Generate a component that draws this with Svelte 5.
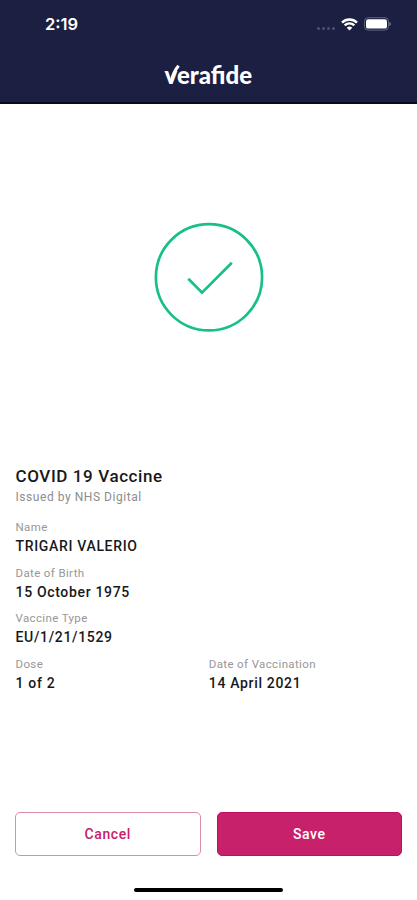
<script>
    let title = "COVID 19 Vaccine"
    let issuer = "NHS Digital"
    let rows = [
        [{label: "Name", value: "TRIGARI VALERIO"}],
        [{label: "Date of Birth", value: "15 October 1975"}],
        [{label: "Vaccine Type", value: "EU/1/21/1529"}],
        [{label: "Dose", value: "1 of 2"}, {label: "Date of Vaccination", value: "14 April 2021"}]
    ]
</script>

<div class="screen">
    <header>
        <div class="status">
            <span class="time">2:19</span>
            <div class="icons">
                <div class="dots"><i></i><i></i><i></i><i></i></div>
                <svg class="wifi" width="17" height="13" viewBox="0 0 17 13">
                    <g fill="none" stroke="#fff" stroke-width="2.4">
                        <path d="M1 4.6a10.6 10.6 0 0 1 15 0" />
                        <path d="M3.7 7.4a6.8 6.8 0 0 1 9.6 0" />
                    </g>
                    <path d="M8.5 12.6 5.7 9.8a4 4 0 0 1 5.6 0z" fill="#fff" />
                </svg>
                <svg class="battery" width="27" height="14" viewBox="0 0 27 14">
                    <rect x=".5" y=".7" width="24" height="12.4" rx="3.6" fill="none" stroke="#5f627e" />
                    <rect x="2" y="2.2" width="21" height="9.4" rx="2.2" fill="#fff" />
                    <path d="M25.5 5v4q1.3-.6 1.3-2t-1.3-2z" fill="#8a8ca0" />
                </svg>
            </div>
        </div>
        <div class="logo">
            <span>verafide</span>
            <svg width="16" height="20" viewBox="0 0 16 20">
                <path d="M6.6 16.5Q8.6 7.5 13.6 1.8" fill="none" stroke="#fff" stroke-width="3.2" />
            </svg>
        </div>
    </header>

    <div class="result">
        <svg width="112" height="112" viewBox="0 0 112 112" fill="none" stroke="#18c083" stroke-width="2.7">
            <circle cx="56" cy="56.3" r="53.1" />
            <path d="M35.3 57.7 49 71.7 78.8 41.8" />
        </svg>
    </div>

    <main>
        <h1>{title}</h1>
        <p class="issued">Issued by {issuer}</p>
        {#each rows as row}
            <div class="row">
                {#each row as field}
                    <div class="field">
                        <div class="label">{field.label}</div>
                        <div class="value">{field.value}</div>
                    </div>
                {/each}
            </div>
        {/each}
    </main>

    <footer>
        <div class="buttons">
            <button class="cancel">Cancel</button>
            <button class="save">Save</button>
        </div>
        <div class="home"></div>
    </footer>
</div>

<style>
    :global(body){
        margin: 0;
        background: #fff;
    }
    .screen{
        height: 900px;
        display: flex;
        flex-direction: column;
        font-family: Roboto, "Liberation Sans", sans-serif;
        color: #18181a;
    }
    header{
        height: 104px;
        box-sizing: border-box;
        background: #1b2043;
        border-bottom: 2px solid #080a20;
    }
    .status{
        display: flex;
        justify-content: space-between;
        align-items: center;
        height: 48px;
        padding: 0 26px 0 45px;
    }
    .time{
        font: 600 16.5px/20px Inter, sans-serif;
        color: #fff;
    }
    .icons{
        display: flex;
        align-items: center;
    }
    .dots{
        display: flex;
        gap: 2px;
        margin: 8px 6px 0 0;
    }
    .dots i{
        width: 3px;
        height: 3px;
        border-radius: 50%;
        background: #4d506e;
    }
    .battery{
        margin-left: 6px;
    }
    .logo{
        position: relative;
        width: 88px;
        margin: 14px auto 0;
        color: #fff;
        font: 900 24px/26px Lato, sans-serif;
    }
    .logo svg{
        position: absolute;
        left: 0;
        top: 2px;
    }
    .result{
        height: 362px;
        display: flex;
        justify-content: center;
        align-items: flex-start;
        padding-top: 117px;
        box-sizing: border-box;
    }
    main{
        flex: 1;
        padding: 0 15px 0 15.5px;
    }
    h1{
        margin: 0;
        font-size: 17px;
        line-height: 21px;
        font-weight: 500;
        letter-spacing: .6px;
    }
    .issued{
        margin: 0 0 11px;
        font-size: 12px;
        line-height: 20px;
        letter-spacing: .55px;
        color: #8c8c8c;
    }
    .row{
        display: grid;
        grid-template-columns: 1fr 1fr;
        margin-bottom: 7.7px;
    }
    .label{
        font-size: 11.5px;
        line-height: 18px;
        letter-spacing: .37px;
        color: #979797;
    }
    .value{
        font-size: 14px;
        line-height: 20px;
        font-weight: 500;
        letter-spacing: .67px;
    }
    .buttons{
        display: grid;
        grid-template-columns: 1fr 1fr;
        gap: 16px;
        padding: 0 15px;
    }
    button{
        height: 44px;
        border: 1px solid #dc8bad;
        border-radius: 5px;
        background: #fff;
        color: #c8216c;
        font-family: inherit;
        font-size: 14px;
        font-weight: 500;
        letter-spacing: .6px;
    }
    .save{
        background: #c8216c;
        border-color: #c00f62;
        color: #fff;
    }
    .home{
        width: 149px;
        height: 4px;
        margin: 32px auto 8px;
        border-radius: 2px;
        background: #000;
    }
</style>
